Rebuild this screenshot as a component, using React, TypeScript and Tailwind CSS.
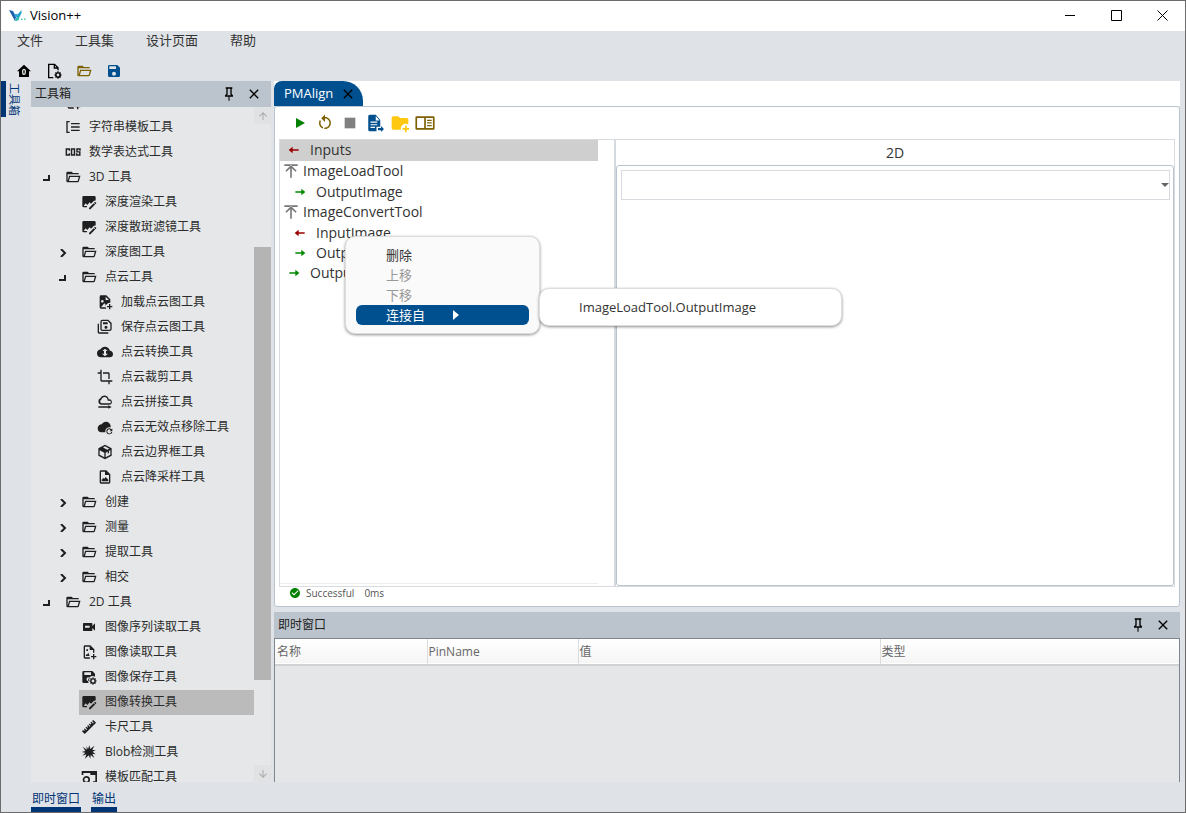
import React from 'react';
import clsx from 'clsx';

interface IconProps {
  className?: string;
}

const Svg: React.FC<IconProps & { children: React.ReactNode }> = ({ className = 'size-4', children }) => (
  <svg viewBox="0 0 24 24" fill="currentColor" className={clsx('shrink-0', className)} aria-hidden="true">
    {children}
  </svg>
);

const path = (d: string): React.FC<IconProps> =>
  function PathIcon({ className }) {
    return (
      <Svg className={className}>
        <path d={d} fillRule="evenodd" />
      </Svg>
    );
  };

const FolderOpen = path('M6.1 10L4 18V8H21A2 2 0 0 0 19 6H12L10 4H4A2 2 0 0 0 2 6V18A2 2 0 0 0 4 20H19C19.9 20 20.6 19.4 20.9 18.5L23.2 10H6.1M19 18H6L7.6 12H20.6L19 18Z');
const Save = path('M15 9H5V5H15M12 19A3 3 0 0 1 9 16A3 3 0 0 1 12 13A3 3 0 0 1 15 16A3 3 0 0 1 12 19M17 3H5C3.89 3 3 3.9 3 5V19A2 2 0 0 0 5 21H19A2 2 0 0 0 21 19V7L17 3Z');
const Pin = path('M16 12V4H17V2H7V4H8V12L6 14V16H11.2V22H12.8V16H18V14L16 12M8.8 14L10 12.8V4H14V12.8L15.2 14H8.8Z');
const Close = path('M19 6.4L17.6 5L12 10.6L6.4 5L5 6.4L10.6 12L5 17.6L6.4 19L12 13.4L17.6 19L19 17.6L13.4 12L19 6.4Z');
const Crop = path('M7 17V1H5V5H1V7H5V17A2 2 0 0 0 7 19H17V23H19V19H23V17M17 15H19V7C19 5.89 18.1 5 17 5H9V7H17V15Z');
const Ruler = path('M1.39 18.36L3.16 16.6L4.58 18L5.64 16.95L4.22 15.54L5.64 14.12L8.11 16.6L9.17 15.54L6.7 13.06L8.11 11.65L9.53 13.06L10.59 12L9.17 10.59L10.59 9.17L13.06 11.65L14.12 10.59L11.65 8.11L13.06 6.7L14.47 8.11L15.54 7.05L14.12 5.64L15.54 4.22L18 6.7L19.07 5.64L16.6 3.16L18.36 1.39L22.61 5.64L5.64 22.61L1.39 18.36Z');
const FolderPlus = path('M13 19C13 19.34 13.04 19.67 13.09 20H4C2.9 20 2 19.11 2 18V6C2 4.89 2.89 4 4 4H10L12 6H20C21.1 6 22 6.89 22 8V13.81C21.12 13.3 20.1 13 19 13C15.69 13 13 15.69 13 19M20 18V15H18V18H15V20H18V23H20V20H23V18H20Z');
const CheckCircle = path('M12 2C6.5 2 2 6.5 2 12S6.5 22 12 22 22 17.5 22 12 17.5 2 12 2M10 17L5 12L6.41 10.59L10 14.17L17.59 6.58L19 8L10 17Z');
const ArrowRight = path('M14 17V13.2H5V10.8H14V7L20 12Z');
const ArrowLeft = path('M10 17V13.2H19V10.8H10V7L4 12Z');
const CollapseUp = path('M3.5 11.5L12 3L20.5 11.5L18.8 13.3L13.2 7.8V22H10.8V7.8L5.2 13.3L3.5 11.5M12 4.5H22V2H2V4.5H12Z');
const Restart = path('M12 4C14.1 4 16.1 4.8 17.6 6.3C20.7 9.4 20.7 14.5 17.6 17.6C15.8 19.5 13.3 20.2 10.9 19.9L11.4 17.9C13.1 18.1 14.9 17.5 16.2 16.2C18.5 13.9 18.5 10.1 16.2 7.7C15.1 6.6 13.5 6 12 6V10.6L7 5.6L12 .6V4M6.3 17.6C3.7 15 3.3 11 5.1 7.9L6.6 9.4C5.5 11.6 5.9 14.4 7.8 16.2C8.3 16.7 8.9 17.1 9.6 17.4L9 19.4C8 19 7.1 18.4 6.3 17.6Z');
const ArrowUp = path('M13 20H11V8L5.5 13.5L4.08 12.08L12 4.16L19.92 12.08L18.5 13.5L13 8V20Z');
const ArrowDown = path('M11 4H13V16L18.5 10.5L19.92 11.92L12 19.84L4.08 11.92L5.5 10.5L11 16V4Z');
const Video = path('M17 10.5V7A1 1 0 0 0 16 6H4A1 1 0 0 0 3 7V17A1 1 0 0 0 4 18H16A1 1 0 0 0 17 17V13.5L21 17.5V6.5L17 10.5M6 10H13V13H6Z');
const Play = path('M4 2V22L22 12Z');
const Stop = path('M4 4H20V20H4Z');
const ListBracket = path('M2 3H7V5H4V19H7V21H2V3M9 6H22V8H9V6M9 11H22V13H9V11M9 16H22V18H9V16Z');
const FilePlus = path('M14 2H6A2 2 0 0 0 4 4V20A2 2 0 0 0 6 22H13.8C13.3 21.4 13.1 20.7 13 20H6V4H13V9H18V13H20V8L14 2M18 15V18H15V20H18V23H20V20H23V18H20V15H18M7 18H13L11 13L9 16L8 15ZM8 8H10.5V10.5H8Z');
const FileImagePlus = path('M14 2H6A2 2 0 0 0 4 4V20A2 2 0 0 0 6 22H14C13.3 21.1 13 20 13 19C13 16 15.7 13.2 20 13.1V8L14 2M8 9A2 2 0 1 1 8 13A2 2 0 1 1 8 9M6 20L11 14L13 16V20H6M13 9V4L18 9H13M18 15V18H15V20H18V23H20V20H23V18H20V15Z');
const FileImage = path('M14 2H6A2 2 0 0 0 4 4V20A2 2 0 0 0 6 22H18A2 2 0 0 0 20 20V8L14 2M18 20H6V4H12V9H18V20M7 18.5V16L9.5 13.5L11 14.5L13 12L17 16V18.5Z');
const ImageEdit = path('M22 9.5V5A2 2 0 0 0 20 3H4A2 2 0 0 0 2 5V18A2 2 0 0 0 4 20H9V18H4L7 14L9.5 16.5L13 12.5L15 14.5L19.5 10H21M22.8 13.3L21.5 12.1C21.2 11.9 20.9 11.9 20.7 12.1L19.7 13.1L21.8 15.2L22.8 14.2C23 13.9 23 13.5 22.8 13.3M12 20.9V23H14.1L21.2 15.9L19.1 13.8L12 20.9Z');
const SaveAll = path('M17 1H8A3 3 0 0 0 5 4V15A3 3 0 0 0 8 18H19A3 3 0 0 0 22 15V6L17 1M20 15A1 1 0 0 1 19 16H8A1 1 0 0 1 7 15V4A1 1 0 0 1 8 3H16L20 7V15M9 5H16V8H9V5M13.5 10A2.3 2.3 0 1 1 13.5 14.6A2.3 2.3 0 1 1 13.5 10M1 7H3V20H17V22H3A2 2 0 0 1 1 20V7Z');
const CloudSwap = path('M19.4 10C18.7 6.6 15.6 4 12 4C9.1 4 6.6 5.6 5.4 8C2.3 8.4 0 10.9 0 14A6 6 0 0 0 6 20H19A5 5 0 0 0 24 15C24 12.4 21.9 10.2 19.4 10M12 7L16 10.5H13.5V14.5H16.5L12 18.5L7.5 14.5H10.5V10.5H8Z');
const CloudLine = path('M6 16A5 5 0 0 1 5 6.5A6.5 6.5 0 0 1 17.5 8A4 4 0 0 1 19 16H6M7 14H18.5A2 2 0 0 0 19 10H16C16 6.5 14 4.5 11.5 4.5C9 4.5 7 6 6.8 8.3A3 3 0 0 0 7 14M2 18.5H17V17L22 19.5L17 22V20.5H2Z');
const CloudRefresh = path('M20.5 10.5C20 6.8 17 4 13.5 4C10.800 4 8.5 5.5 7.2 8C3.700 8 1 10.7 1 14.3C1 17.5 3.3 20 6.5 20H12.5A6.5 6.5 0 0 1 20.5 12.5M18.5 14A4.5 4.5 0 1 0 23 19.5H21.3A2.9 2.9 0 1 1 20.6 16.7L19 18.2H23V14.2L21.8 15.4A4.5 4.5 0 0 0 18.5 14Z');
const Cube = path('M12 1L2 6.5V17.5L12 23L22 17.5V6.5L12 1M12 3.3L18.5 7L15.5 8.7L9 5.2L12 3.3M4 9.3L11 13V20L4 16.3V9.3M13 13L16 11.4V14.5L18 13.4V10.3L20 9.3V16.3L13 20V13Z');
const Blob = path('M10.5 8L12.5 2L14 7.5L20 2.5L17 9L22 9L17.500 11.500L22 15.5L17 14.5L20 21L14.5 16.500L14 22L11.5 17L6 22L8 15.500L2 17.500L6.5 13L1 12L6.5 10.5L2.5 4L8.5 8.5L8.5 3Z');
const PanelRight = path('M2 4H22A1.5 1.5 0 0 1 23.5 5.5V18.5A1.5 1.5 0 0 1 22 20H2A1.5 1.5 0 0 1 .5 18.5V5.5A1.5 1.5 0 0 1 2 4M2.5 6V18H11V6H2.5M13 6V18H21.5V6H13M14.5 8H20V9.5H14.5V8M14.5 11.2H20V12.7H14.5V11.2M14.5 14.5H20V16H14.5V14.5Z');
const FileExport = path('M14 1H5A2 2 0 0 0 3 3V21A2 2 0 0 0 5 23H14V17H19V8L13 1M13 2.5L18 8.5H13V2.5M6 10H15V11.5H6V10M6 13.5H15V15H6V13.5M6 17H12V18.5H6V17M16 18.5H20V16L24 20L20 24V21.5H16Z');
const Template = path('M1 3H24V21H18V18.5H21.5V9H14V6H3.5V9H1V3M8 10.5A5.5 5.5 0 1 1 8 21.5A5.5 5.5 0 0 1 5.5 21L2 24L0 22L3.5 19A5.5 5.5 0 0 1 8 10.5M8 13A3 3 0 1 0 8 19A3 3 0 1 0 8 13Z');

const Cog: React.FC = () => (
  <>
    <circle cx="18" cy="18" r="3.2" fill="none" stroke="currentColor" strokeWidth="2.2" />
    <path d="M18 12.5V15M18 21V23.5M12.5 18H15M21 18H23.5M14.2 14.2L15.7 15.7M20.3 20.3L21.8 21.8M21.8 14.2L20.3 15.7M15.7 20.3L14.2 21.8" stroke="currentColor" strokeWidth="1.8" />
  </>
);

const FileCog: React.FC<IconProps> = ({ className }) => (
  <Svg className={className}>
    <path d="M11 22H4V2H13L18 7V11M12.5 2V7.5H18" fill="none" stroke="currentColor" strokeWidth="2" />
    <Cog />
  </Svg>
);

const SaveCog: React.FC<IconProps> = ({ className }) => (
  <Svg className={className}>
    <path fillRule="evenodd" d="M4 3H17L21 7V11.5A7 7 0 0 0 11.5 21H4A2 2 0 0 1 2 19V5A2 2 0 0 1 4 3M5 5V9H15V5H5M11 12.5A3 3 0 0 0 9 17.5L11.5 18L13 13.5Z" />
    <Cog />
  </Svg>
);

const Home: React.FC<IconProps> = ({ className }) => (
  <Svg className={className}>
    <path fillRule="evenodd" d="M12 2.5L1.5 12.5H4.5V21H19.5V12.5H22.5L12 2.5M12 8.5C14 8.5 15 10 15 13S14 18 12 18S9 16.5 9 13S10 8.5 12 8.5M12 10.5C11.2 10.5 11 11.5 11 13.2S11.2 16.2 12 16.2S13 15 13 13.2S12.8 10.5 12 10.5Z" />
  </Svg>
);

const Cos: React.FC<IconProps> = ({ className }) => (
  <Svg className={className}>
    <path fill="none" stroke="currentColor" strokeWidth="2.2" d="M6.5 10V7.5H2V16.5H6.5V14M9.8 7.5H14.2V16.5H9.8ZM22.5 10V7.5H18V11.8H22.2V16.5H17.5V14" />
  </Svg>
);

const Logo: React.FC = () => (
  <svg viewBox="0 0 18 14" className="h-[14px] w-[18px]" aria-hidden="true">
    <path d="M0 1L4 2L7 8L6 12Z" fill="#1b5fae" />
    <path d="M4 2L5.5 5L9 5L8 8L6.5 8Z" fill="#37a5dc" />
    <path d="M12.5 1L9 5L6 12L9 11L12.5 4Z" fill="#1fa0c8" />
    <path d="M6 12L9 7L10 11Z" fill="#2fc0a8" />
    <path d="M12 9.5H13.5V11H12ZM15 9.5H16.5V11H15Z" fill="#4ccfa8" />
  </svg>
);

type Twisty = 'open' | 'closed';

interface ToolNode {
  label: string;
  level: 0 | 1 | 2;
  icon: React.FC<IconProps>;
  twisty?: Twisty;
  selected?: boolean;
}

const tools: ToolNode[] = [
  { label: '', level: 0, icon: FilePlus },
  { label: '字符串模板工具', level: 0, icon: ListBracket },
  { label: '数学表达式工具', level: 0, icon: Cos },
  { label: '3D 工具', level: 0, icon: FolderOpen, twisty: 'open' },
  { label: '深度渲染工具', level: 1, icon: ImageEdit },
  { label: '深度散斑滤镜工具', level: 1, icon: ImageEdit },
  { label: '深度图工具', level: 1, icon: FolderOpen, twisty: 'closed' },
  { label: '点云工具', level: 1, icon: FolderOpen, twisty: 'open' },
  { label: '加载点云图工具', level: 2, icon: FileImagePlus },
  { label: '保存点云图工具', level: 2, icon: SaveAll },
  { label: '点云转换工具', level: 2, icon: CloudSwap },
  { label: '点云裁剪工具', level: 2, icon: Crop },
  { label: '点云拼接工具', level: 2, icon: CloudLine },
  { label: '点云无效点移除工具', level: 2, icon: CloudRefresh },
  { label: '点云边界框工具', level: 2, icon: Cube },
  { label: '点云降采样工具', level: 2, icon: FileImage },
  { label: '创建', level: 1, icon: FolderOpen, twisty: 'closed' },
  { label: '测量', level: 1, icon: FolderOpen, twisty: 'closed' },
  { label: '提取工具', level: 1, icon: FolderOpen, twisty: 'closed' },
  { label: '相交', level: 1, icon: FolderOpen, twisty: 'closed' },
  { label: '2D 工具', level: 0, icon: FolderOpen, twisty: 'open' },
  { label: '图像序列读取工具', level: 1, icon: Video },
  { label: '图像读取工具', level: 1, icon: FilePlus },
  { label: '图像保存工具', level: 1, icon: SaveCog },
  { label: '图像转换工具', level: 1, icon: ImageEdit, selected: true },
  { label: '卡尺工具', level: 1, icon: Ruler },
  { label: 'Blob检测工具', level: 1, icon: Blob },
  { label: '模板匹配工具', level: 1, icon: Template },
];

const indents = ['pl-0', 'pl-4', 'pl-8'];

const TwistyMark: React.FC<{ state: Twisty }> = ({ state }) => (
  <svg viewBox="0 0 8 8" className="size-2" fill="none" stroke="#1f1f1f" strokeWidth="2" aria-hidden="true">
    <path d={state === 'open' ? 'M6 1V6H0' : 'M2 0L6 4L2 8'} />
  </svg>
);

const PanelHeader: React.FC<{ title: string }> = ({ title }) => (
  <header className="flex h-[26px] shrink-0 items-center bg-[#bbc4cc] pl-1 pr-[9px] text-xs text-[#222]">
    <h2 className="flex-1">{title}</h2>
    <button className="mr-[9px] text-black" aria-label={`固定${title}`}>
      <Pin className="size-4" />
    </button>
    <button className="text-black" aria-label={`关闭${title}`}>
      <Close className="size-4" />
    </button>
  </header>
);

const Toolbox: React.FC = () => (
  <aside className="flex w-60 shrink-0 flex-col">
    <PanelHeader title="工具箱" />
    <div className="flex min-h-0 flex-1 bg-[#e5e7e9]">
      <div className="min-w-0 flex-1 overflow-hidden">
        <ul className="-mt-[17px] text-xs text-[#2b2b2b]">
          {tools.map(({ label, level, icon: Icon, twisty, selected }, i) => (
            <li key={i} className={clsx('flex h-[25px]', indents[level])}>
              <span className="flex w-8 shrink-0 items-center justify-center">
                {twisty && <TwistyMark state={twisty} />}
              </span>
              <span className={clsx('flex flex-1 items-center gap-2 whitespace-nowrap pb-[2px] pl-[2px]', selected && 'bg-[#bbb]')}>
                <Icon className="size-4 text-[#1f1f1f]" />
                {label}
              </span>
            </li>
          ))}
        </ul>
      </div>
      <div className="flex w-[17px] shrink-0 flex-col">
        <button className="flex h-[17px] items-center justify-center bg-[#e1e2e3] text-[#aaa]" aria-label="向上滚动">
          <ArrowUp className="size-3" />
        </button>
        <div className="grow-[123]" />
        <div className="grow-[433] bg-[#b4b4b4]" />
        <div className="grow-[85]" />
        <button className="flex h-[17px] items-center justify-center bg-[#e1e2e3] text-[#aaa]" aria-label="向下滚动">
          <ArrowDown className="size-3" />
        </button>
      </div>
    </div>
  </aside>
);

type FlowKind = 'group-in' | 'group-out' | 'tool' | 'pin-in' | 'pin-out';

const flow: { label: string; kind: FlowKind }[] = [
  { label: 'Inputs', kind: 'group-in' },
  { label: 'ImageLoadTool', kind: 'tool' },
  { label: 'OutputImage', kind: 'pin-out' },
  { label: 'ImageConvertTool', kind: 'tool' },
  { label: 'InputImage', kind: 'pin-in' },
  { label: 'OutputImage', kind: 'pin-out' },
  { label: 'Outputs', kind: 'group-out' },
];

const FlowRow: React.FC<{ label: string; kind: FlowKind }> = ({ label, kind }) => {
  if (kind === 'tool') {
    return (
      <li className="flex h-[21px] items-center gap-1 pb-px pl-[3px] text-[#333]">
        <CollapseUp className="size-4 text-[#777]" />
        {label}
      </li>
    );
  }
  const isPin = kind.startsWith('pin');
  const isInput = kind.endsWith('in');
  return (
    <li
      className={clsx(
        'flex items-center gap-2 pb-px text-[#333]',
        isPin ? 'h-5 pl-3' : 'h-[21px] pl-[6px]',
        kind === 'group-in' && 'bg-[#cfcfcf]',
      )}
    >
      {isInput ? <ArrowLeft className="size-4 text-[#900]" /> : <ArrowRight className="size-4 text-[#080]" />}
      {label}
    </li>
  );
};

const ContextMenu: React.FC = () => (
  <div
    role="menu"
    className="absolute left-[71px] top-[155px] w-[195px] rounded-[10px] border border-[#ddd] bg-[#fafafa] px-[10px] py-2 text-[13px] leading-5 shadow-[0_1px_3px_rgba(0,0,0,0.45)]"
  >
    <button role="menuitem" className="block w-full pl-[30px] text-left text-[#333]">删除</button>
    <button role="menuitem" disabled className="block w-full pl-[30px] text-left text-[#999]">上移</button>
    <button role="menuitem" disabled className="block w-full pl-[30px] text-left text-[#999]">下移</button>
    <button role="menuitem" aria-haspopup="menu" className="flex w-full items-center gap-7 rounded-md bg-[#00508f] pl-[30px] text-left text-white">
      连接自
      <svg viewBox="0 0 6 10" className="h-[10px] w-[6px]" fill="white" aria-hidden="true">
        <path d="M0 0L6 5L0 10Z" />
      </svg>
    </button>
    <div
      role="menu"
      className="absolute left-full top-[51px] w-[303px] rounded-[10px] border border-[#ddd] bg-white px-[9px] py-2 shadow-[0_1px_3px_rgba(0,0,0,0.45)]"
    >
      <button role="menuitem" className="block w-full pl-[30px] text-left text-[#333]">ImageLoadTool.OutputImage</button>
    </div>
  </div>
);

const docActions: { label: string; icon: React.FC<IconProps>; className: string }[] = [
  { label: '运行', icon: Play, className: 'size-3 text-[#008000]' },
  { label: '重新运行', icon: Restart, className: 'size-[18px] text-[#7d6000]' },
  { label: '停止', icon: Stop, className: 'size-4 text-[#808080]' },
  { label: '导出', icon: FileExport, className: 'size-[18px] text-[#00508f]' },
  { label: '新建文件夹', icon: FolderPlus, className: 'size-5 text-[#ffc810]' },
  { label: '布局', icon: PanelRight, className: 'size-5 text-[#7d6000]' },
];

const DocumentPanel: React.FC = () => (
  <section className="relative flex min-h-0 flex-1 flex-col">
    <div className="flex h-[25px] shrink-0 bg-white">
      <div className="flex w-[89px] items-center justify-between rounded-tl-lg rounded-tr-[20px] bg-[#00508f] pl-[10px] pr-[7px] text-[13px] text-white">
        <button>PMAlign</button>
        <button className="text-black" aria-label="关闭 PMAlign">
          <Close className="size-4" />
        </button>
      </div>
    </div>
    <div className="flex min-h-0 flex-1 flex-col rounded-[3px] border border-[#b9c4ce] bg-white px-1">
      <div className="flex h-8 shrink-0 items-center pl-2">
        {docActions.map(({ label, icon: Icon, className }) => (
          <button key={label} aria-label={label} className="flex w-[25px] justify-center">
            <Icon className={className} />
          </button>
        ))}
      </div>
      <div className="flex min-h-0 flex-1 border border-[#d8dce1]">
        <div className="w-[336px] shrink-0 border-r-2 border-[#d5dae0] pb-[2px] pr-4">
          <ul className="h-full border-b border-[#eee] text-sm">
            {flow.map((item, i) => (
              <FlowRow key={i} {...item} />
            ))}
          </ul>
        </div>
        <div className="flex min-w-0 flex-1 flex-col">
          <h3 className="flex h-[25px] items-center justify-center pt-px text-sm text-[#333]">2D</h3>
          <div className="flex-1 rounded-[3px] border border-[#b9c4ce] pl-1 pr-[3px] pt-1">
            <div className="relative">
              <select aria-label="2D 图像" className="block h-[30px] w-full appearance-none border border-[#d8dce1] bg-white px-2 text-sm">
                <option value=""></option>
              </select>
              <svg viewBox="0 0 8 4" className="pointer-events-none absolute right-px top-[13px] h-1 w-2" fill="#666" aria-hidden="true">
                <path d="M0 0H8L4 4Z" />
              </svg>
            </div>
          </div>
        </div>
      </div>
      <footer className="flex h-[19px] shrink-0 items-start gap-[5px] pl-[10px] text-[10px] leading-[13px] text-[#555]">
        <CheckCircle className="size-3 text-[#008000]" />
        <span>Successful</span>
        <span className="pl-[5px]">0ms</span>
      </footer>
    </div>
    <ContextMenu />
  </section>
);

const ImmediatePanel: React.FC = () => (
  <section className="flex h-[170px] shrink-0 flex-col">
    <PanelHeader title="即时窗口" />
    <div className="min-h-0 flex-1 border border-b-0 border-[#7f868f] bg-[#e5e6e8]">
      <table className="w-full table-fixed border-collapse text-left text-xs text-[#666]">
        <thead>
          <tr className="h-[26px] border-b-2 border-[#cfd1d3] bg-linear-to-b from-white to-[#f5f5f6]">
            <th className="w-[152px] border-r border-[#ddd] px-[2px] font-normal">名称</th>
            <th className="w-[151px] border-r border-[#ddd] px-px font-normal">PinName</th>
            <th className="w-[302px] border-r border-[#ddd] px-px font-normal">值</th>
            <th className="px-px font-normal">类型</th>
          </tr>
        </thead>
      </table>
    </div>
  </section>
);

export default function App() {
  return (
    <div className="flex h-screen flex-col overflow-hidden border border-[#6b6b6b] bg-[#dfe2e7] font-['Open_Sans','Noto_Sans_CJK_SC',sans-serif] text-[#333]">
      {/* Title bar */}
      <header className="flex h-[30px] shrink-0 items-center bg-white pl-2 text-black">
        <Logo />
        <h1 className="flex-1 pl-[3px] text-[13px]">Vision++</h1>
        {[
          { label: '最小化', d: 'M0 5.5H10' },
          { label: '最大化', d: 'M.5 .5H10.5V10.5H.5Z' },
          { label: '关闭', d: 'M.5 .5L10.5 10.5M10.5 .5L.5 10.5' },
        ].map(({ label, d }) => (
          <button key={label} aria-label={label} className="flex h-full w-[46px] items-center justify-center pb-px">
            <svg viewBox="0 0 11 11" className="size-[11px]" fill="none" stroke="black" aria-hidden="true">
              <path d={d} />
            </svg>
          </button>
        ))}
      </header>

      {/* Menu and main toolbar */}
      <nav className="flex h-5 shrink-0 items-center gap-8 pl-4 text-[13px]">
        <button>文件</button>
        <button>工具集</button>
        <button>设计页面</button>
        <button>帮助</button>
      </nav>
      <div className="flex h-[30px] shrink-0 items-end gap-[14px] pb-[2px] pl-[15px] text-black">
        <button aria-label="主页"><Home className="size-4" /></button>
        <button aria-label="新建"><FileCog className="size-4" /></button>
        <button aria-label="打开" className="text-[#7d6000]"><FolderOpen className="size-4" /></button>
        <button aria-label="保存" className="text-[#00508f]"><Save className="size-4" /></button>
      </div>

      {/* Docked panels */}
      <main className="flex min-h-0 flex-1 pr-[5px]">
        <div className="w-[30px] shrink-0">
          <button className="h-9 border-l-[5px] border-[#003575] text-[11px] leading-4 text-[#003575] [text-orientation:sideways] [writing-mode:vertical-rl]">
            工具箱
          </button>
        </div>
        <Toolbox />
        <div className="ml-[3px] flex min-w-0 flex-1 flex-col gap-[5px]">
          <DocumentPanel />
          <ImmediatePanel />
        </div>
      </main>

      {/* Auto-hide tabs */}
      <footer className="flex h-[30px] shrink-0 items-end gap-[10px] pl-[30px] text-xs text-[#003575]">
        <button className="border-b-[5px] border-[#003575] px-px">即时窗口</button>
        <button className="border-b-[5px] border-[#003575] px-px">输出</button>
      </footer>
    </div>
  );
}
